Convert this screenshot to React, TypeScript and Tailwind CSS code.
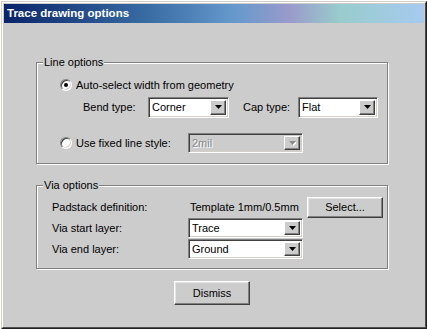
import React from "react";

const FONT = { fontFamily: '"Liberation Sans", Arial, sans-serif' };

const Arrow = ({ disabled }: { disabled?: boolean }) => (
  <div className="flex items-center justify-center w-[16px] h-full bg-[#cccccc] border border-t-white border-l-white border-r-[#404040] border-b-[#404040] shadow-[inset_-1px_-1px_0_#808080]">
    <svg width="7" height="5" viewBox="0 0 7 5">
      {disabled && <path d="M1 1h7L4.5 5z" fill="#ffffff" />}
      <path d="M0 0h7L3.5 4z" fill={disabled ? "#8a8a8a" : "#000"} />
    </svg>
  </div>
);

const Combo = ({
  value,
  width,
  height,
  disabled,
}: {
  value: string;
  width: number;
  height: number;
  disabled?: boolean;
}) => (
  <div
    className={`flex flex-row items-stretch border border-t-[#808080] border-l-[#808080] border-r-white border-b-white shadow-[inset_1px_1px_0_#404040,inset_-1px_-1px_0_#d4d0c8] p-[2px] ${disabled ? "bg-[#cccccc]" : "bg-white"}`}
    style={{ width, height }}
  >
    <div
      className={`flex-1 flex items-center pl-[1px] text-[11px] leading-none ${disabled ? "text-[#8a8a8a] [text-shadow:1px_1px_0_#fff]" : "text-black"}`}
    >
      {value}
    </div>
    <Arrow disabled={disabled} />
  </div>
);

const Radio = ({ checked }: { checked?: boolean }) => (
  <div className="relative w-[12px] h-[12px] rounded-full bg-white border border-t-[#808080] border-l-[#808080] border-r-white border-b-white shadow-[inset_1px_1px_0_#404040,inset_-1px_-1px_0_#d4d0c8] flex items-center justify-center">
    {checked && <div className="w-[4px] h-[4px] rounded-full bg-black" />}
  </div>
);

const Button = ({ label, width, height }: { label: string; width: number; height: number }) => (
  <div
    className="flex items-center justify-center bg-[#cccccc] border border-t-white border-l-white border-r-[#404040] border-b-[#404040] shadow-[inset_-1px_-1px_0_#808080,inset_1px_1px_0_#e4e4e4] text-[11px] text-black"
    style={{ width, height }}
  >
    {label}
  </div>
);

const Group = ({
  title,
  height,
  children,
}: {
  title: string;
  height: number;
  children: React.ReactNode;
}) => (
  <div
    className="relative ml-[32px] w-[352px] border border-[#808080] shadow-[inset_1px_1px_0_#fff,1px_1px_0_#fff]"
    style={{ height }}
  >
    <span className="absolute left-[6px] -top-[8px] bg-[#cccccc] px-[1px] text-[11px] leading-[14px] text-black">
      {title}
    </span>
    {children}
  </div>
);

export default function App() {
  return (
    <div className="w-[427px] h-[329px] bg-white pt-[1px] pl-[1px]" style={FONT}>
      <div className="w-[426px] h-[328px] border border-t-[#d4d0c8] border-l-[#d4d0c8] border-r-[#202020] border-b-[#202020]">
        <div className="w-full h-full border border-t-white border-l-white border-r-[#505050] border-b-[#505050] p-[1px] bg-[#cccccc] flex flex-col">
          <div className="h-[19px] shrink-0 flex items-center pl-[3px] bg-[linear-gradient(to_right,#0a246a_0%,#3a6ea5_35%,#6699cc_55%,#9a9acb_68%,#99cccc_80%,#a6caf0_100%)]">
            <span className="text-white font-bold text-[11.5px] leading-none">Trace drawing options</span>
          </div>

          <div className="flex flex-col text-[11px] text-black">
            <div className="h-[39px]" />
            <Group title="Line options" height={102}>
              <div className="flex flex-col pl-[23px] pt-[14px]">
                <div className="flex flex-row items-center h-[16px] gap-[4px]">
                  <Radio checked />
                  <span>Auto-select width from geometry</span>
                </div>
                <div className="flex flex-row items-center mt-[4px] ml-[23px]">
                  <span className="w-[65px]">Bend type:</span>
                  <Combo value="Corner" width={81} height={21} />
                  <span className="w-[55px] ml-[14px]">Cap type:</span>
                  <Combo value="Flat" width={80} height={21} />
                </div>
                <div className="flex flex-row items-center mt-[15px]">
                  <Radio />
                  <span className="w-[112px] ml-[4px]">Use fixed line style:</span>
                  <Combo value="2mil" width={115} height={20} disabled />
                </div>
              </div>
            </Group>

            <div className="h-[21px]" />
            <Group title="Via options" height={84}>
              <div className="flex flex-col pl-[15px] pt-[11px]">
                <div className="flex flex-row items-center h-[21px]">
                  <span className="w-[136px]">Padstack definition:</span>
                  <span className="w-[115px] pl-[2px]">Template 1mm/0.5mm</span>
                  <div className="ml-[4px]">
                    <Button label="Select..." width={76} height={21} />
                  </div>
                </div>
                <div className="flex flex-row items-center">
                  <span className="w-[136px]">Via start layer:</span>
                  <Combo value="Trace" width={115} height={20} />
                </div>
                <div className="flex flex-row items-center mt-[1px]">
                  <span className="w-[136px]">Via end layer:</span>
                  <Combo value="Ground" width={115} height={20} />
                </div>
              </div>
            </Group>

            <div className="mt-[12px] ml-[170px]">
              <Button label="Dismiss" width={76} height={24} />
            </div>
          </div>
        </div>
      </div>
    </div>
  );
}
